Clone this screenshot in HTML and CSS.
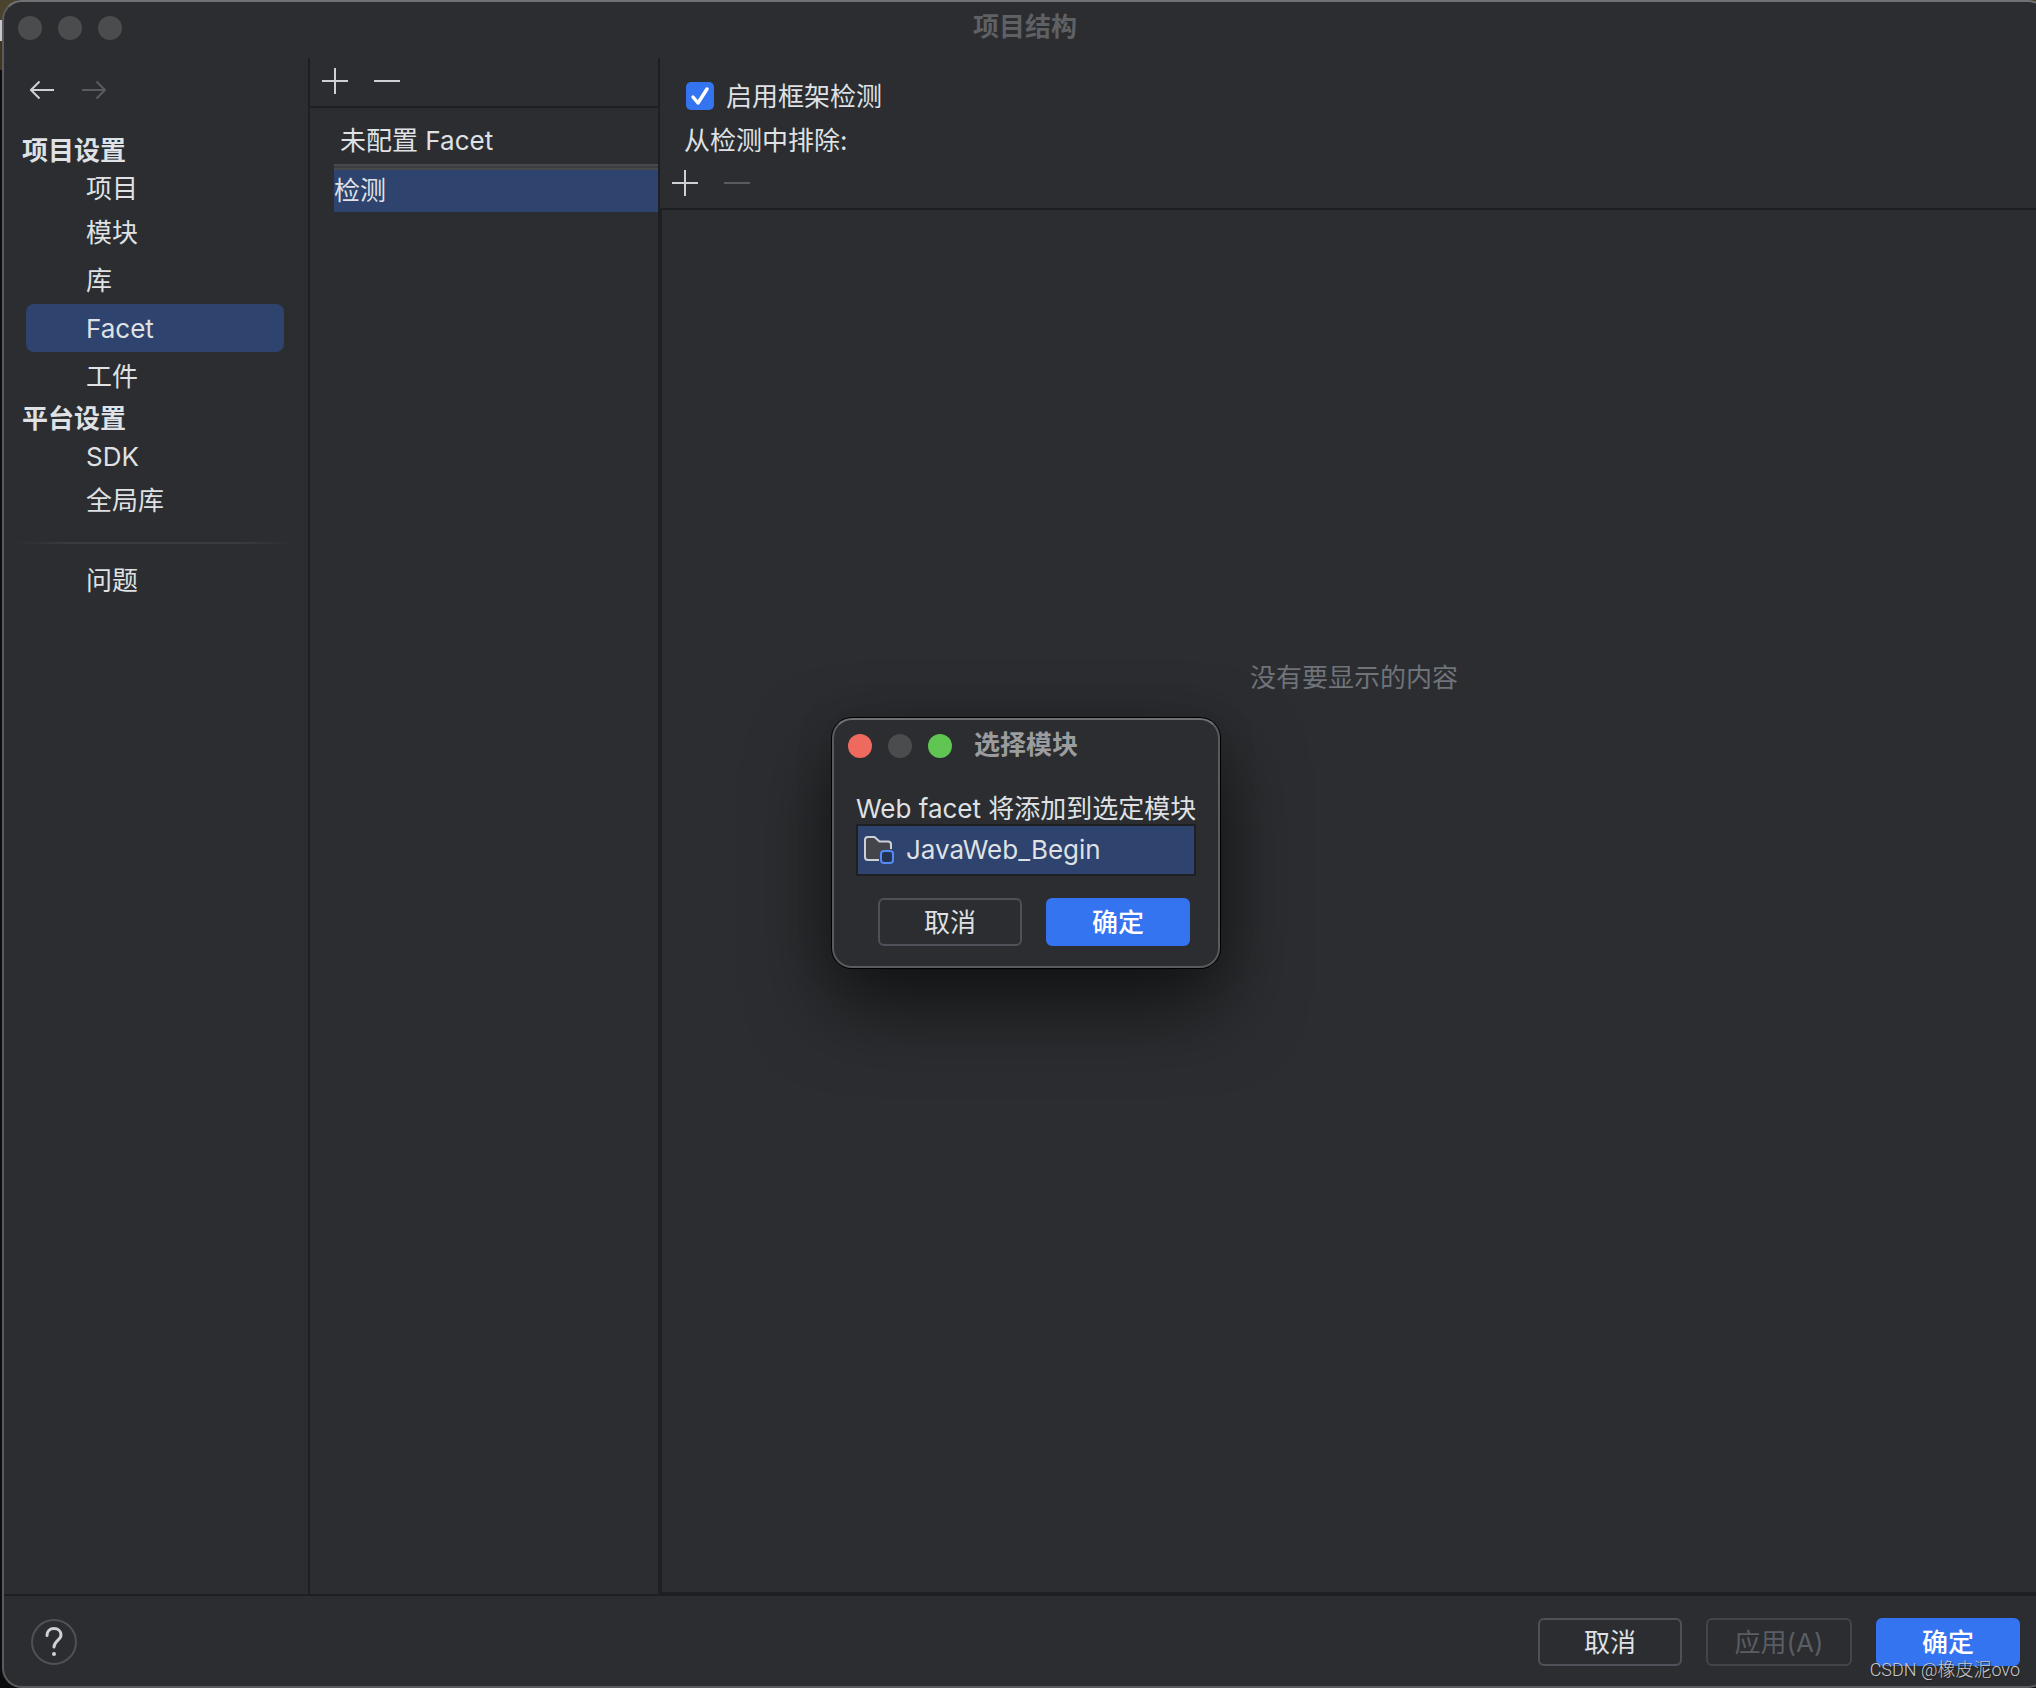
FILE: index.html
```html
<!DOCTYPE html>
<html lang="zh-CN">
<head>
<meta charset="utf-8">
<title>项目结构</title>
<link rel="stylesheet" href="styles.css">
</head>
<body>
<main class="window">
  <header class="titlebar">
    <div class="lights"><span class="light"></span><span class="light"></span><span class="light"></span></div>
    <h1 class="title">项目结构</h1>
  </header>

  <div class="columns">
    <nav class="sidebar">
      <div class="history">
        <button class="icon-btn" type="button" aria-label="后退"><svg width="26" height="20" viewBox="0 0 26 20"><path d="M24 10H1M9.500 1.500L1 10l8.500 8.500"/></svg></button>
        <button class="icon-btn" type="button" aria-label="前进" disabled><svg width="26" height="20" viewBox="0 0 26 20"><path d="M0 10h23M14.500 1.500L23 10l-8.500 8.500"/></svg></button>
      </div>
      <h2 class="group">项目设置</h2>
      <a class="item item-first" href="#project">项目</a>
      <a class="item" href="#modules">模块</a>
      <a class="item" href="#libraries">库</a>
      <a class="item item-selected" href="#facets">Facet</a>
      <a class="item" href="#artifacts">工件</a>
      <h2 class="group">平台设置</h2>
      <a class="item item-first" href="#sdks">SDK</a>
      <a class="item" href="#global-libraries">全局库</a>
      <hr class="divider">
      <a class="item" href="#problems">问题</a>
    </nav>

    <section class="facets">
      <div class="toolbar">
        <button class="icon-btn" type="button" aria-label="添加"><svg width="26" height="26" viewBox="0 0 26 26"><path d="M0 13h26M13 0v26"/></svg></button>
        <button class="icon-btn" type="button" aria-label="移除"><svg width="26" height="26" viewBox="0 0 26 26"><path d="M0 13h26"/></svg></button>
      </div>
      <ul class="facet-list">
        <li class="facet">未配置 Facet</li>
        <li class="facet facet-selected">检测</li>
      </ul>
    </section>

    <section class="detection">
      <div class="options">
        <label class="check"><input class="checkbox" type="checkbox" checked>启用框架检测</label>
        <p class="caption">从检测中排除:</p>
      </div>
      <div class="exclude-bar">
        <button class="icon-btn" type="button" aria-label="添加排除项"><svg width="26" height="26" viewBox="0 0 26 26"><path d="M0 13h26M13 0v26"/></svg></button>
        <button class="icon-btn" type="button" aria-label="移除排除项" disabled><svg width="26" height="26" viewBox="0 0 26 26"><path d="M0 13h26"/></svg></button>
      </div>
      <div class="exclude-list">没有要显示的内容</div>
    </section>
  </div>

  <footer class="footer">
    <button class="help" type="button" aria-label="帮助"><svg width="18" height="30" viewBox="0 0 18 30"><path d="M2 8.500C2 4 5 1.500 9 1.500s7 2.700 7 6.500c0 5-7 6-7 12"/><circle cx="9" cy="27" r="2"/></svg></button>
    <div class="actions">
      <button class="btn" type="button">取消</button>
      <button class="btn btn-apply" type="button" disabled>应用(A)</button>
      <button class="btn btn-primary" type="button">确定</button>
    </div>
  </footer>
</main>

<div class="dialog" role="dialog" aria-labelledby="dialog-title">
  <header class="titlebar">
    <div class="lights"><span class="light light-close"></span><span class="light"></span><span class="light light-zoom"></span></div>
    <h2 class="title" id="dialog-title">选择模块</h2>
  </header>
  <div class="dialog-body">
    <p class="caption">Web facet 将添加到选定模块</p>
    <ul class="module-list">
      <li class="module">
        <svg class="module-icon" width="32" height="32" viewBox="0 0 32 32"><path class="folder" d="M17 26H6a3 3 0 0 1-3-3V6a3 3 0 0 1 3-3h6.500l5 4.500H26a3 3 0 0 1 3 3V15"/><rect class="folder-mark" x="19" y="17" width="12" height="12" rx="3"/></svg>
        JavaWeb_Begin
      </li>
    </ul>
    <div class="actions">
      <button class="btn" type="button">取消</button>
      <button class="btn btn-primary" type="button">确定</button>
    </div>
  </div>
</div>
<div class="watermark">CSDN @橡皮泥ovo</div>
</body>
</html>
```
FILE: styles.css
```css
* { box-sizing: border-box; }

body {
  position: relative;
  display: flex;
  min-height: 100vh;
  margin: 0;
  padding-left: 2px;
  overflow: hidden;
  background: linear-gradient(#4b432d 20px, #c8c8c8 20px, #c8c8c8 41px, #40361f 41px, #40361f 70px, #0b0c0e 70px);
  color: #dfe1e5;
  font: 26px/36px Inter, "Noto Sans CJK SC", sans-serif;
}

h1, h2, p, ul { margin: 0; padding: 0; font-size: 26px; }
ul { list-style: none; }
button { padding: 0; color: inherit; font: inherit; }

/* The window runs a little past the right edge of the screen. */
.window {
  display: flex;
  flex: 1;
  flex-direction: column;
  margin-right: -12px;
  border: 2px solid #5a5b5e;
  border-top-color: #707276;
  border-radius: 20px;
  background: #2b2d30;
}

.titlebar {
  display: grid;
  grid-template-columns: 1fr auto 1fr;
  align-items: center;
  height: 52px;
  padding: 0 14px;
}
.lights { display: flex; gap: 16px; }
.light { width: 24px; height: 24px; border-radius: 50%; background: #4b4c4e; }
.light-close { background: #ee6a5f; }
.light-zoom { background: #61c554; }
.title { height: 36px; color: #5f6063; font-weight: 700; line-height: 34px; }

.columns {
  display: grid;
  flex: 1;
  grid-template-columns: 306px 350px 1fr;
  margin-top: 4px;
}

.icon-btn { display: flex; border: 0; background: none; }
.icon-btn svg, .help svg { fill: none; stroke: #ced0d6; stroke-width: 2; }
.icon-btn:disabled svg { stroke: #5a5b5c; }

.sidebar { padding: 22px 24px 0 22px; border-right: 2px solid #1e1f22; }
.history { display: flex; gap: 26px; margin: 0 4px 32px; }
.group { height: 36px; margin: 0 -4px; font-weight: 700; line-height: 38px; }
.item {
  display: block;
  height: 48px;
  padding-left: 60px;
  border-radius: 8px;
  color: inherit;
  line-height: 50px;
  text-decoration: none;
}
.item-first { height: 40px; line-height: 42px; }
.item-selected { background: #2e436e; }
.divider {
  height: 2px;
  margin: 18px -12px 12px;
  border: 0;
  background: linear-gradient(90deg, transparent, #393b40 20%, #393b40 80%, transparent);
}

.facets { border-right: 2px solid #1e1f22; }
.toolbar {
  display: flex;
  gap: 26px;
  height: 50px;
  padding: 10px 12px;
  border-bottom: 2px solid #1e1f22;
}
.facet-list { padding: 12px 0 0 24px; }
.facet { height: 44px; padding-left: 6px; line-height: 42px; }
.facet-selected {
  height: 48px;
  padding: 6px 0 0;
  background: linear-gradient(#47484b 2px, #3c3d40 2px, #3c3d40 4px, #47484b 4px, #47484b 6px, #2e436e 6px);
}

.detection { display: flex; flex-direction: column; }
.options { height: 100px; padding: 21px 24px 0; }
.check { display: flex; gap: 12px; align-items: center; height: 36px; padding-left: 2px; }
.checkbox {
  width: 28px;
  height: 28px;
  margin: -2px 0 0;
  border-radius: 5px;
  background: #3574f0 url("data:image/svg+xml,%3Csvg xmlns='http://www.w3.org/2000/svg' viewBox='0 0 28 28'%3E%3Cpath d='M7 15l5 6 9-14' fill='none' stroke='white' stroke-width='3.500' stroke-linecap='round' stroke-linejoin='round'/%3E%3C/svg%3E");
  appearance: none;
}
.options .caption { margin-top: 8px; }
.exclude-bar { display: flex; gap: 26px; height: 50px; padding: 12px; }
.exclude-list {
  flex: 1;
  padding-top: 450px;
  border: solid #1e1f22;
  border-width: 2px 0 2px 2px;
  color: #6f737a;
  text-align: center;
}

.footer {
  display: flex;
  align-items: center;
  justify-content: space-between;
  height: 92px;
  padding: 2px 26px 0 27px;
  border-top: 2px solid #1e1f22;
}
.help {
  display: grid;
  place-items: center;
  width: 46px;
  height: 46px;
  border: 2px solid #4e5157;
  border-radius: 50%;
  background: none;
}
.help path { stroke-width: 3; stroke-linecap: round; }
.help circle { fill: #ced0d6; stroke: none; }

.actions { display: flex; gap: 24px; }
.btn {
  min-width: 144px;
  height: 48px;
  padding-top: 2px;
  border: 2px solid #4e5157;
  border-radius: 6px;
  background: none;
}
.btn-apply { min-width: 146px; }
.btn:disabled { border-color: #43454a; color: #5a5d63; }
.btn-primary { border-color: #3574f0; background: #3574f0; color: #fff; font-weight: 500; }

.dialog {
  position: absolute;
  top: calc(50% - 1px);
  left: calc(50% + 8px);
  width: 388px;
  border: 2px solid #5a5b5e;
  border-top-color: #707276;
  border-radius: 20px;
  background: #2b2d30;
  box-shadow: 0 0 0 1px #000, 0 36px 80px rgba(0, 0, 0, .6), 0 0 40px rgba(0, 0, 0, .1);
  transform: translate(-50%, -50%);
}
.dialog .title { color: #9b9c9e; }
.dialog-body { padding: 22px 22px 20px; }
.dialog .caption { line-height: 30px; white-space: nowrap; }
.module-list { border: 2px solid #1e1f22; }
.module {
  display: flex;
  gap: 12px;
  align-items: center;
  height: 48px;
  padding-left: 4px;
  background: #2e436e;
}
.module-icon { fill: none; stroke-width: 2; }
.folder { fill: #43454a; stroke: #ced0d6; }
.folder-mark { fill: #25324d; stroke: #548af7; }
.dialog .actions { justify-content: flex-end; margin: 22px 6px 0; }

.watermark {
  position: absolute;
  right: 16px;
  bottom: 6px;
  color: #c8c9cb;
  font-family: Roboto, "Noto Sans CJK SC", sans-serif;
  font-size: 18px;
  font-weight: 300;
  line-height: 24px;
  text-shadow: 1px 1px 1px #222;
}
```
